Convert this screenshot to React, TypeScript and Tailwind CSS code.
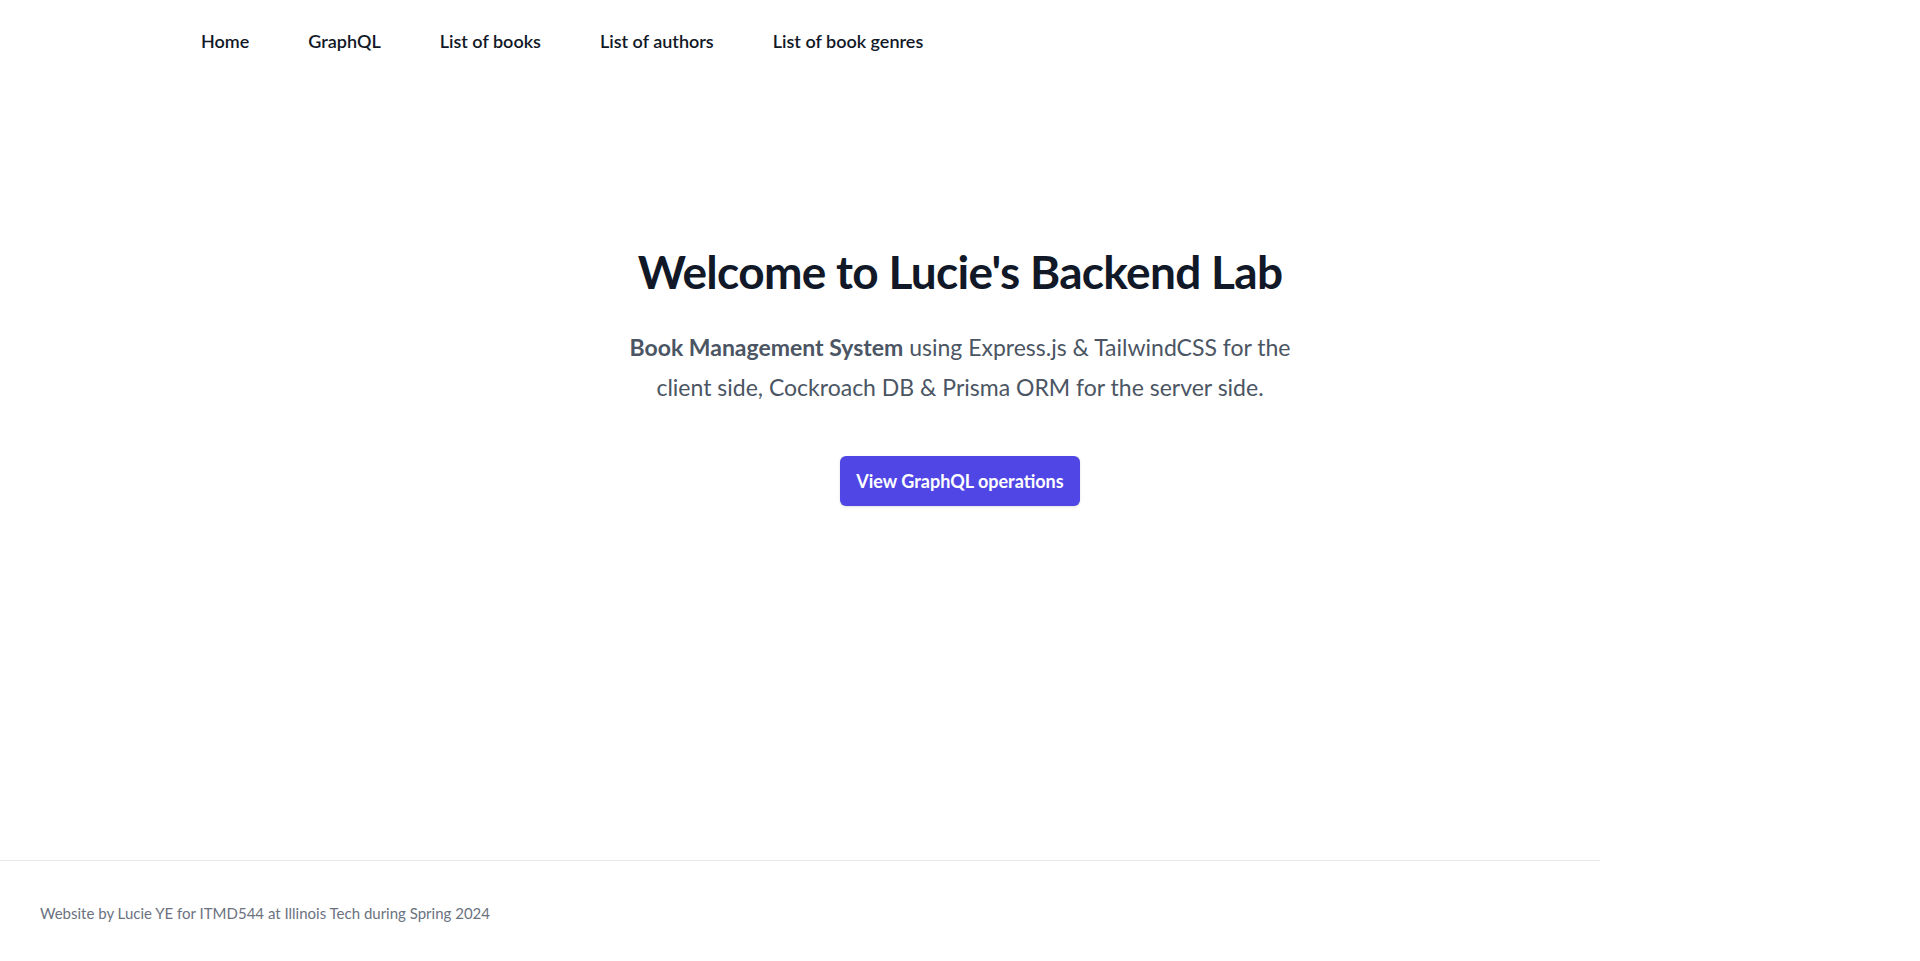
const navLinks = ["Home", "GraphQL", "List of books", "List of authors", "List of book genres"];

export default function App() {
  return (
    <div className="min-h-screen flex flex-col bg-white font-['Lato','Noto_Sans',sans-serif]">
      {/* Top navigation */}
      <nav className="flex gap-[59px] pl-[201px] pt-[29px] pb-[31px] text-[18px] leading-6 font-semibold text-[#111827]">
        {navLinks.map((link) => (
          <a key={link} href="#" className="hover:text-[#4f46e5]">
            {link}
          </a>
        ))}
      </nav>

      {/* Hero */}
      <main className="flex-1 flex flex-col items-center pt-[165px] text-center">
        <h1 className="text-[46px] leading-none font-bold tracking-[-0.015em] text-[#111827]">
          Welcome to Lucie's Backend Lab
        </h1>
        <p className="mt-[32px] max-w-[700px] text-[23px] leading-10 text-[#4b5563]">
          <span className="font-bold">Book Management System</span> using Express.js &amp; TailwindCSS for the client
          side, Cockroach DB &amp; Prisma ORM for the server side.
        </p>
        <a
          href="#"
          className="mt-[49px] rounded-md bg-[#4f46e5] px-4 py-[11px] text-lg leading-7 font-bold text-white shadow-sm hover:bg-[#6366f1]"
        >
          View GraphQL operations
        </a>
      </main>

      {/* Footer */}
      <footer className="w-5/6 border-t border-[#e5e7eb] px-10 pt-[42px] pb-[38px]">
        <p className="text-[15px] leading-5 text-[#6b7280]">
          Website by Lucie YE for ITMD544 at Illinois Tech during Spring 2024
        </p>
      </footer>
    </div>
  );
}
